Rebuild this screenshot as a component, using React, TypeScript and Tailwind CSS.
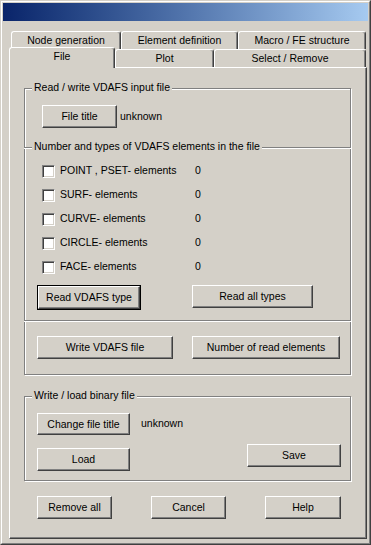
import React from "react";

function Btn({ className = "", children }: { className?: string; children: React.ReactNode }) {
  return (
    <div
      className={`flex items-center justify-center border border-t-white border-l-white border-r-[#404040] border-b-[#404040] bg-[#d4d0c8] shadow-[inset_-1px_-1px_0_#808080] leading-none whitespace-nowrap ${className}`}
    >
      {children}
    </div>
  );
}

function Check({ label }: { label: string }) {
  return (
    <div className="flex items-center h-[24px] pl-[18px]">
      <div className="w-[13px] h-[13px] border border-t-[#808080] border-l-[#808080] border-r-white border-b-white bg-white shadow-[inset_1px_1px_0_#404040,inset_-1px_-1px_0_#d4d0c8]" />
      <div className="ml-[5px] w-[135px] whitespace-nowrap">{label}</div>
      <div>0</div>
    </div>
  );
}

function Tab({ className = "", children }: { className?: string; children: React.ReactNode }) {
  return (
    <div
      className={`flex items-center justify-center border-t border-l border-r border-t-white border-l-white border-r-[#404040] rounded-t-[3px] shadow-[inset_-1px_0_0_#808080] bg-[#d4d0c8] whitespace-nowrap ${className}`}
    >
      {children}
    </div>
  );
}

export default function App() {
  return (
    <div className="w-[371px] h-[545px] bg-[#d4d0c8] border border-t-[#d4d0c8] border-l-[#d4d0c8] border-r-[#404040] border-b-[#404040] font-['Liberation_Sans',Arial,sans-serif] text-[10.5px] text-black">
      <div className="h-full border border-t-white border-l-white border-r-[#808080] border-b-[#808080] p-[1px] flex flex-col">
        <div className="h-[18px] bg-linear-to-r from-[#0a246a] to-[#a6caf0]" />
        <div className="mt-[10px] ml-[6px] mr-[1px] flex flex-col">
          <div className="flex h-[18px] pl-[2px]">
            <Tab className="w-[110px] h-[18px]">Node generation</Tab>
            <Tab className="w-[117px] h-[18px]">Element definition</Tab>
            <Tab className="w-[128px] h-[18px]">Macro / FE structure</Tab>
          </div>
          <div className="flex h-[18px] items-end">
            <Tab className="relative z-10 w-[106px] h-[21px] -mb-[1px] pb-[3px]">File</Tab>
            <Tab className="w-[99px] h-[18px]">Plot</Tab>
            <Tab className="w-[152px] h-[18px]">Select / Remove</Tab>
          </div>
          <div className="h-[472px] border border-t-white border-l-white border-r-[#404040] border-b-[#404040] shadow-[inset_-1px_-1px_0_#808080] flex flex-col">
            {/* Group 1 */}
            <div className="relative ml-[14px] mt-[20px] w-[327px] border border-[#808080] shadow-[1px_1px_0_#fff,inset_1px_1px_0_#fff] flex flex-col">
              <div className="absolute -top-[8px] left-[7px] px-[2px] bg-[#d4d0c8] leading-[13px] whitespace-nowrap">
                Read / write VDAFS input file
              </div>
              <div className="mt-[16px] ml-[17px] flex items-center gap-[3px]">
                <Btn className="w-[75px] h-[23px]">File title</Btn>
                <span>unknown</span>
              </div>
              {/* Group 2 */}
              <div className="relative mt-[19px] -mx-[1px] border-t border-b border-[#808080] shadow-[inset_0_1px_0_#fff,0_1px_0_#fff] flex flex-col pt-[11px] pb-[10px]">
                <div className="absolute -top-[8px] left-[8px] px-[2px] bg-[#d4d0c8] leading-[13px] whitespace-nowrap">
                  Number and types of VDAFS elements in the file
                </div>
                <Check label="POINT , PSET- elements" />
                <Check label="SURF- elements" />
                <Check label="CURVE- elements" />
                <Check label="CIRCLE- elements" />
                <Check label="FACE- elements" />
                <div className="mt-[6px] pl-[13px] flex items-start">
                  <div className="w-[104px] h-[25px] border border-black">
                    <Btn className="w-full h-full">Read VDAFS type</Btn>
                  </div>
                  <Btn className="ml-[51px] w-[121px] h-[23px]">Read all types</Btn>
                </div>
              </div>
              <div className="mt-[15px] ml-[12px] pb-[15px] flex gap-[19px]">
                <Btn className="w-[136px] h-[23px]">Write VDAFS file</Btn>
                <Btn className="w-[148px] h-[23px]">Number of read elements</Btn>
              </div>
            </div>
            {/* Group 3 */}
            <div className="relative ml-[14px] mt-[21px] w-[327px] border border-[#808080] shadow-[1px_1px_0_#fff,inset_1px_1px_0_#fff] flex flex-col pb-[9px]">
              <div className="absolute -top-[8px] left-[7px] px-[2px] bg-[#d4d0c8] leading-[13px] whitespace-nowrap">
                Write / load binary file
              </div>
              <div className="mt-[16px] ml-[12px] flex items-center">
                <Btn className="w-[93px] h-[22px]">Change file title</Btn>
                <span className="ml-[11px]">unknown</span>
              </div>
              <div className="mt-[9px] ml-[12px] flex items-start">
                <Btn className="mt-[4px] w-[93px] h-[23px]">Load</Btn>
                <Btn className="ml-[117px] w-[94px] h-[23px]">Save</Btn>
              </div>
            </div>
            <div className="mt-[15px] ml-[27px] flex">
              <Btn className="w-[75px] h-[23px]">Remove all</Btn>
              <Btn className="ml-[39px] w-[75px] h-[23px]">Cancel</Btn>
              <Btn className="ml-[39px] w-[76px] h-[23px]">Help</Btn>
            </div>
          </div>
        </div>
      </div>
    </div>
  );
}
